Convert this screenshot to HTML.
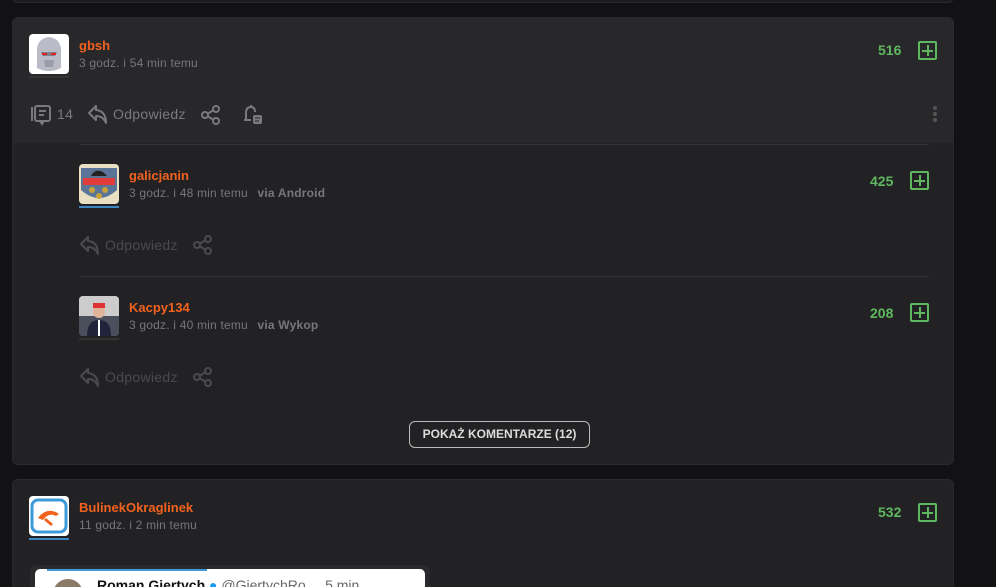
<!DOCTYPE html>
<html style="width:996px;height:587px;overflow:hidden"><head><meta charset="utf-8">
<style>
*{box-sizing:border-box;margin:0;padding:0}
body{width:996px;height:587px;overflow:hidden;background:#121214;font-family:"Liberation Sans",sans-serif;position:relative}
.card{position:absolute;left:12px;width:942px;background:#222224;border:1px solid #2a2a2c;border-radius:6px;overflow:hidden}
.top{position:absolute;left:0;top:0;width:100%;height:125px;background:#28282a}
.abs{position:absolute}
.name{color:#f2621f;font-weight:bold;font-size:13px}
.time{color:#77777a;font-size:12px;white-space:nowrap;letter-spacing:0.2px}
.via{color:#77777a;font-weight:bold;margin-left:6px}
.score{color:#5fb760;font-weight:bold;font-size:14px}
.plus{width:19px;height:19px;border:2px solid #5fb760;border-radius:2px}
.plus:before{content:"";position:absolute;left:7px;top:2px;width:2px;height:11px;background:#5fb760}
.plus:after{content:"";position:absolute;left:2px;top:7px;width:11px;height:2px;background:#5fb760}
.act{color:#7a7a7d;font-size:14px;letter-spacing:0.3px}
.act2{color:#4b4b4e;font-size:14px;letter-spacing:0.3px}
.sep{height:1px;background:#333336}
.av{width:40px;height:40px;border-radius:4px;overflow:hidden}
.ul{height:2px}
</style></head><body>
<div class="card" style="top:-30px;height:33px;background:#1c1c1e"></div>

<div class="card" style="top:17px;height:448px">
  <div class="top"></div>
  <div class="abs av" style="left:16px;top:16px;background:#fff">
    <svg width="40" height="40"><path d="M8 34 L8 14 Q10 4 20 3 Q30 4 32 14 L32 34 Q20 40 8 34Z" fill="#b9bcc6"/><path d="M12 18 L28 18 L26 22 L14 22Z" fill="#7d808b"/><rect x="13" y="19" width="5" height="2" fill="#d22"/><rect x="22" y="19" width="5" height="2" fill="#d22"/><path d="M15 26 L25 26 L24 33 L16 33Z" fill="#9a9daa"/></svg>
  </div>
  <div class="abs ul" style="left:16px;top:58px;width:40px;background:#333"></div>
  <div class="abs name" style="left:66px;top:20px">gbsh</div>
  <div class="abs time" style="left:66px;top:38px">3 godz. i 54 min temu</div>
  <div class="abs score" style="left:865px;top:24px">516</div>
  <div class="abs plus" style="left:905px;top:23px"></div>
  <svg class="abs" style="left:16px;top:86px" width="24" height="22" fill="none" stroke="#7a7a7d" stroke-width="2"><path d="M3 3 L3 17"/><rect x="6" y="2" width="15" height="15" rx="2"/><path d="M10 7h7M10 11h5M11 17l2 3 2-3"/></svg>
  <div class="abs act" style="left:44px;top:88px">14</div>
  <svg class="abs" style="left:74px;top:85px" width="22" height="22" fill="none" stroke="#7a7a7d" stroke-width="2" stroke-linejoin="round"><path d="M9 3 L2 10 L9 17 L9 13 Q16 13 19 20 Q19 8 9 7Z"/></svg>
  <div class="abs act" style="left:100px;top:88px">Odpowiedz</div>
  <svg class="abs" style="left:187px;top:86px" width="22" height="22" fill="none" stroke="#7a7a7d" stroke-width="2"><circle cx="5" cy="11" r="3"/><circle cx="16" cy="5" r="3"/><circle cx="16" cy="17" r="3"/><path d="M8 9.5l5-3M8 12.5l5 3"/></svg>
  <svg class="abs" style="left:228px;top:85px" width="24" height="24" fill="none" stroke="#7a7a7d" stroke-width="2"><path d="M5 17 L5 10 Q5 4 10 4 Q14 4 14 9"/><path d="M3 17h7M10 2v2"/><rect x="12" y="12" width="9" height="9" rx="2" fill="#7a7a7d" stroke="none"/><path d="M14 15h5M14 18h4" stroke="#28282a" stroke-width="1"/></svg>
  <div class="abs" style="left:920px;top:88px;width:4px">
    <div style="width:4px;height:4px;border-radius:2px;background:#555;margin-bottom:2px"></div>
    <div style="width:4px;height:4px;border-radius:2px;background:#555;margin-bottom:2px"></div>
    <div style="width:4px;height:4px;border-radius:2px;background:#555"></div>
  </div>
  <div class="abs sep" style="left:67px;top:126px;width:849px"></div>

  <div class="abs av" style="left:66px;top:146px;background:#e9dfc3">
    <svg width="40" height="40"><path d="M2 4 L38 4 L38 26 Q20 42 2 26Z" fill="#5a7598"/><rect x="4" y="14" width="32" height="7" fill="#e23b3b"/><path d="M12 12 Q16 4 24 8 L28 12Z" fill="#222"/><circle cx="13" cy="26" r="3" fill="#c9a23a"/><circle cx="26" cy="26" r="3" fill="#c9a23a"/><circle cx="20" cy="32" r="3" fill="#c9a23a"/></svg>
  </div>
  <div class="abs ul" style="left:66px;top:188px;width:40px;background:#3c86c2"></div>
  <div class="abs name" style="left:116px;top:150px">galicjanin</div>
  <div class="abs time" style="left:116px;top:168px">3 godz. i 48 min temu <span class="via">via Android</span></div>
  <div class="abs score" style="left:857px;top:155px">425</div>
  <div class="abs plus" style="left:897px;top:153px"></div>
  <svg class="abs" style="left:66px;top:216px" width="22" height="22" fill="none" stroke="#4b4b4e" stroke-width="2" stroke-linejoin="round"><path d="M9 3 L2 10 L9 17 L9 13 Q16 13 19 20 Q19 8 9 7Z"/></svg>
  <div class="abs act2" style="left:92px;top:219px">Odpowiedz</div>
  <svg class="abs" style="left:179px;top:216px" width="22" height="22" fill="none" stroke="#4b4b4e" stroke-width="2"><circle cx="5" cy="11" r="3"/><circle cx="16" cy="5" r="3"/><circle cx="16" cy="17" r="3"/><path d="M8 9.5l5-3M8 12.5l5 3"/></svg>
  <div class="abs sep" style="left:67px;top:258px;width:849px"></div>

  <div class="abs av" style="left:66px;top:278px;background:#8a8a90">
    <svg width="40" height="40"><rect width="40" height="20" fill="#ccc"/><rect y="20" width="40" height="20" fill="#4b4f5c"/><circle cx="20" cy="16" r="6" fill="#e0b49a"/><rect x="14" y="7" width="12" height="5" fill="#d33"/><path d="M8 40 Q8 24 20 24 Q32 24 32 40Z" fill="#20243a"/><rect x="19" y="24" width="2" height="16" fill="#fff"/></svg>
  </div>
  <div class="abs ul" style="left:66px;top:320px;width:40px;background:#333"></div>
  <div class="abs name" style="left:116px;top:282px">Kacpy134</div>
  <div class="abs time" style="left:116px;top:300px">3 godz. i 40 min temu <span class="via">via Wykop</span></div>
  <div class="abs score" style="left:857px;top:287px">208</div>
  <div class="abs plus" style="left:897px;top:285px"></div>
  <svg class="abs" style="left:66px;top:348px" width="22" height="22" fill="none" stroke="#4b4b4e" stroke-width="2" stroke-linejoin="round"><path d="M9 3 L2 10 L9 17 L9 13 Q16 13 19 20 Q19 8 9 7Z"/></svg>
  <div class="abs act2" style="left:92px;top:351px">Odpowiedz</div>
  <svg class="abs" style="left:179px;top:348px" width="22" height="22" fill="none" stroke="#4b4b4e" stroke-width="2"><circle cx="5" cy="11" r="3"/><circle cx="16" cy="5" r="3"/><circle cx="16" cy="17" r="3"/><path d="M8 9.5l5-3M8 12.5l5 3"/></svg>

  <div class="abs" style="left:396px;top:403px;width:181px;height:27px;border:1px solid #bbb;border-radius:6px;color:#ddd;font-size:12px;font-weight:bold;text-align:center;line-height:25px">POKAŻ KOMENTARZE (12)</div>
</div>

<div class="card" style="top:479px;height:108px;border-bottom:none;border-radius:6px 6px 0 0">
  <div class="abs av" style="left:16px;top:16px;background:#fff">
    <svg width="40" height="40"><rect x="3" y="4" width="34" height="32" rx="6" fill="none" stroke="#3d9ad8" stroke-width="3"/><path d="M9 22 Q18 10 30 18 L27 20 Q20 16 14 24Z" fill="#f2621f"/><path d="M17 22 L24 28 L22 30 L15 24Z" fill="#f2621f"/></svg>
  </div>
  <div class="abs ul" style="left:16px;top:58px;width:40px;background:#3c86c2"></div>
  <div class="abs name" style="left:66px;top:20px">BulinekOkraglinek</div>
  <div class="abs time" style="left:66px;top:38px">11 godz. i 2 min temu</div>
  <div class="abs score" style="left:865px;top:24px">532</div>
  <div class="abs plus" style="left:905px;top:23px"></div>
  <div class="abs" style="left:17px;top:85px;width:400px;height:40px;background:#2a2a2d;border-radius:6px"></div>
  <div class="abs" style="left:22px;top:89px;width:390px;height:40px;background:#fff;border-radius:5px;overflow:hidden">
    <div style="position:absolute;left:12px;top:0;width:160px;height:2px;background:#3d9ad8"></div>
    <div style="position:absolute;left:18px;top:10px;width:30px;height:30px;border-radius:15px;background:#8a7a66"></div>
    <div style="position:absolute;left:62px;top:8px;font-size:14px;font-weight:bold;color:#111;white-space:nowrap">Roman Giertych <span style="color:#1d9bf0">●</span> <span style="font-weight:normal;color:#666">@GiertychRo ... 5 min</span></div>
  </div>
</div>
</body></html>
